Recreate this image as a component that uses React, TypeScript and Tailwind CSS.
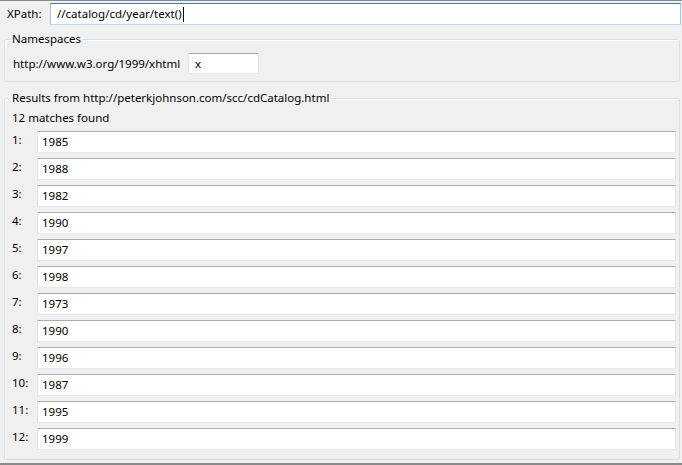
const years = ["1985", "1988", "1982", "1990", "1997", "1998", "1973", "1990", "1996", "1987", "1995", "1999"];

const font = { fontFamily: '"Noto Sans", "Segoe UI", sans-serif' };

function Field({ value, className = "" }: { value: string; className?: string }) {
  return (
    <div
      className={
        "flex items-center h-[22px] bg-white border border-t-[#abadb3] border-x-[#e2e3ea] border-b-[#e3e9ef] pl-[4px] text-black " +
        className
      }
    >
      {value}
    </div>
  );
}

export default function App() {
  return (
    <div
      className="w-[682px] h-[465px] bg-[#f0f0f0] border-t border-t-[#8a8a8a] border-b-2 border-b-[#8a8a8a] text-[11.5px] leading-[16px] text-black overflow-hidden"
      style={font}
    >
      {/* xpath */}
      <div className="flex items-center pt-[2px] pl-[7px] pr-[1px]">
        <span className="w-[43px]">XPath:</span>
        <div className="flex-1 flex items-center h-[22px] bg-white border border-t-[#3d7bad] border-x-[#a4c9e3] border-b-[#b7d9ed] pl-[6px]">
          <span>//catalog/cd/year/text()</span>
          <span className="inline-block w-[1px] h-[15px] bg-black ml-[1px]" />
        </div>
      </div>

      {/* namespaces */}
      <fieldset className="mt-[6px] ml-[4px] mr-[2px] border border-[#d5dfe5] rounded-[3px] shadow-[inset_1px_1px_0_#fff] px-[5px] pb-[7px]">
        <legend className="px-[2px]">Namespaces</legend>
        <div className="flex items-center pl-[3px] pt-[6px]">
          <span className="w-[175px]">http://www.w3.org/1999/xhtml</span>
          <div className="flex items-center w-[71px] h-[21px] bg-white border border-t-[#abadb3] border-x-[#e2e3ea] border-b-[#e3e9ef] pl-[6px]">
            x
          </div>
        </div>
      </fieldset>

      {/* results */}
      <fieldset className="mt-[8px] ml-[4px] mr-[2px] border border-[#d5dfe5] rounded-[3px] shadow-[inset_1px_1px_0_#fff] pl-[5px] pr-[3px] pb-[9px]">
        <legend className="px-[2px]">Results from http://peterkjohnson.com/scc/cdCatalog.html</legend>
        <div className="pl-[2px] pt-[4px]">12 matches found</div>
        <div className="flex flex-col gap-[5px] pt-[5px] pl-[2px]">
          {years.map((y, i) => (
            <div key={i} className="flex items-start">
              <span className="w-[25px] pt-[1px]">{i + 1}:</span>
              <Field value={y} className="flex-1" />
            </div>
          ))}
        </div>
      </fieldset>
    </div>
  );
}
